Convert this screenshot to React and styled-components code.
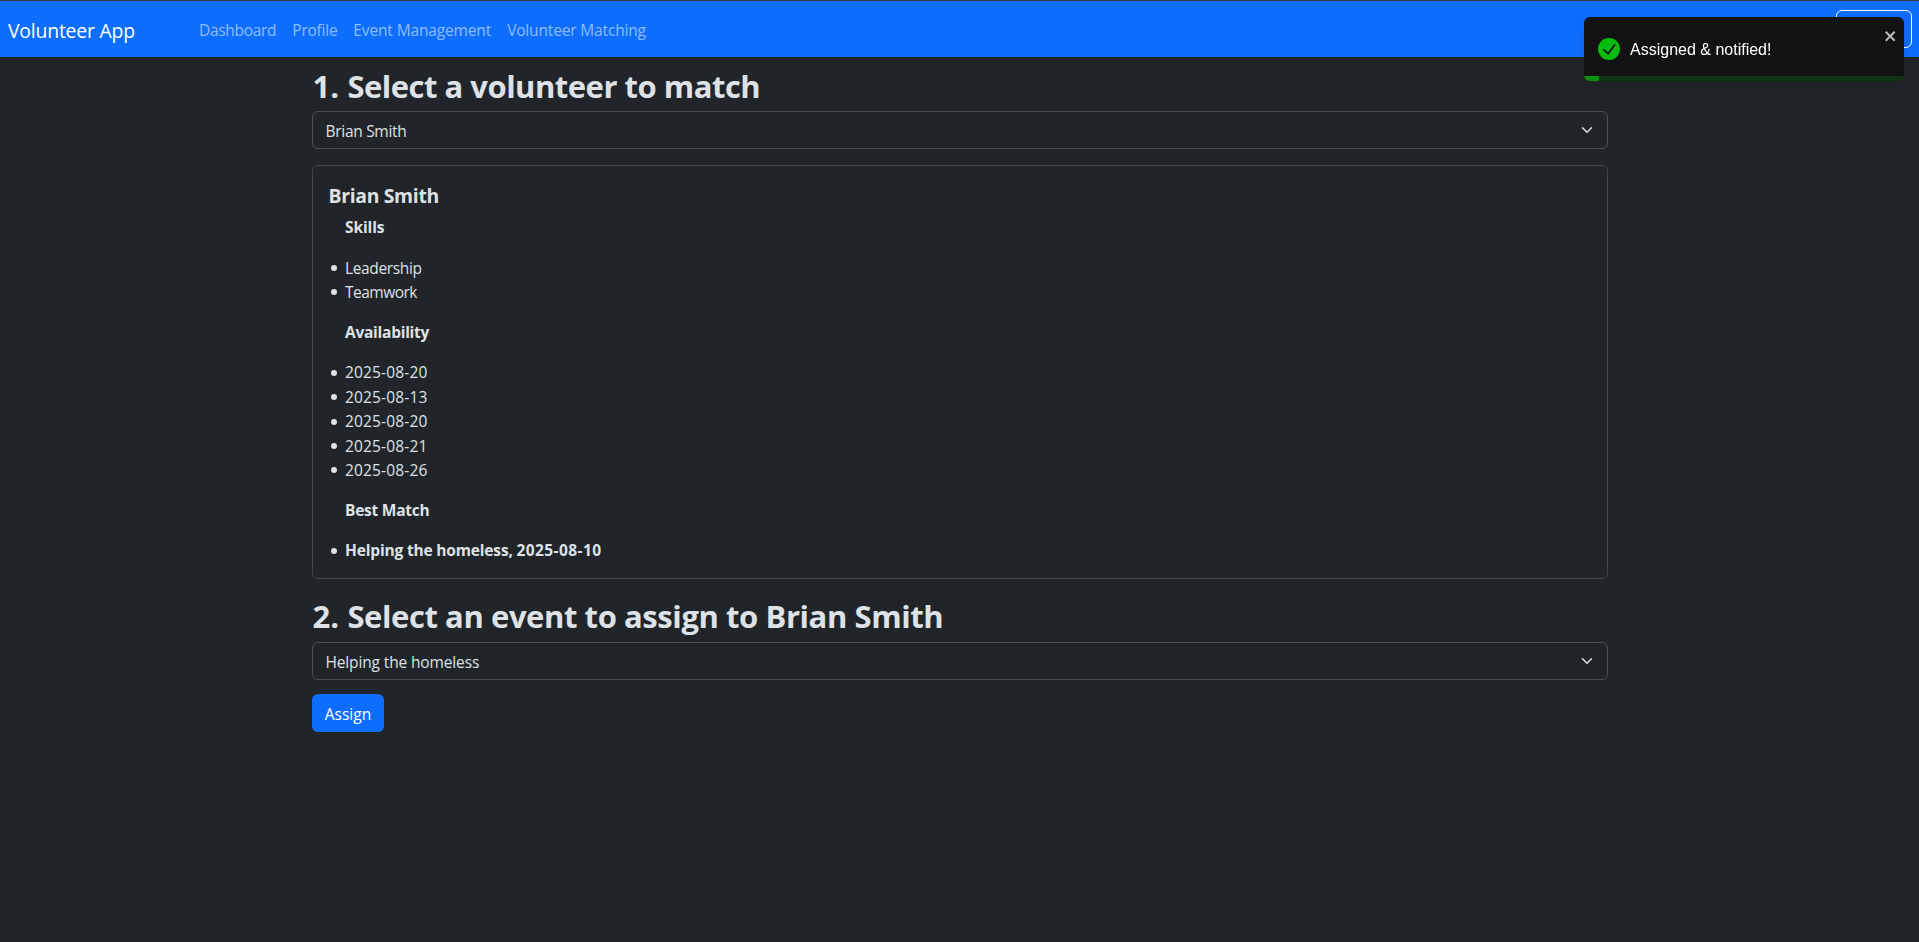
import React from "react";
import styled, { createGlobalStyle } from "styled-components";

const GlobalStyle = createGlobalStyle`
  *, *::before, *::after { box-sizing: border-box; }
  body {
    margin: 0;
    background: #212529;
    color: #dee2e6;
    font-family: "Open Sans", "Noto Sans", sans-serif;
    font-size: 15.5px;
    line-height: 24px;
    overflow: hidden;
  }
`;

const Page = styled.div`
  min-height: 942px;
  border-top: 1px solid #343a46;
`;

const Navbar = styled.nav`
  display: flex;
  align-items: center;
  height: 56px;
  padding: 0 7px 0 8px;
  background: #0d6efd;
`;

const Brand = styled.a`
  width: 183px;
  padding-top: 3px;
  color: #fff;
  font-size: 19.4px;
  line-height: 30px;
  letter-spacing: -0.2px;
  white-space: nowrap;
`;

const NavLinks = styled.div`
  display: flex;
  flex: 1;
  padding-top: 2px;
`;

const NavLink = styled.a`
  padding: 0 8px;
  color: rgba(255, 255, 255, 0.55);
  letter-spacing: ${(p) => p.$track}px;
  white-space: nowrap;
`;

const OutlineButton = styled.button`
  width: 76px;
  height: 38px;
  border: 1px solid #f8f9fa;
  border-radius: 6px;
  background: transparent;
`;

const Container = styled.main`
  width: 1320px;
  margin: 0 auto;
  padding: 8px 12px;
`;

const Heading = styled.h2`
  height: 38.4px;
  margin: 0 0 8px;
  padding-left: 1px;
  font-size: 31px;
  font-weight: 700;
  line-height: 42.4px;
  letter-spacing: ${(p) => p.$track}px;
`;

const Step = styled.span`
  letter-spacing: 0.1px;
`;

const SelectBox = styled.button`
  display: flex;
  align-items: center;
  justify-content: space-between;
  width: 100%;
  height: 38px;
  padding: 0 12px 0 13px;
  border: 1px solid #495057;
  border-radius: 6px;
  background: #212529;
  color: #dee2e6;
  font: inherit;
  letter-spacing: ${(p) => p.$track}px;
`;

const SelectText = styled.span`
  padding-top: 2px;
`;

const Card = styled.section`
  height: 414px;
  margin: 16px 0;
  padding: 16px;
  border: 1px solid #424649;
  border-radius: 6px;
`;

const CardTitle = styled.h5`
  height: 24px;
  margin: 0 0 8px;
  font-size: 19.4px;
  font-weight: 700;
  line-height: 28px;
  letter-spacing: -0.33px;
`;

const Label = styled.p`
  height: 24px;
  margin: 0 0 16px;
  padding-left: 16.5px;
  font-weight: 700;
  line-height: 26px;
  letter-spacing: ${(p) => p.$track}px;
`;

const List = styled.ul`
  margin: 0 0 16px;
  padding: 0;
  list-style: none;
`;

const Item = styled.li`
  display: flex;
  align-items: center;
  height: 24.4px;
  padding-top: 2px;
  font-weight: ${(p) => (p.$bold ? 700 : 400)};
  letter-spacing: ${(p) => p.$track}px;
  white-space: pre;

  &::before {
    content: "";
    width: 6px;
    height: 6px;
    margin: 1px 8px 0 2.5px;
    border-radius: 50%;
    background: #dee2e6;
  }
`;

const Wide = styled.span`
  letter-spacing: 0.4px;
`;

const PrimaryButton = styled.button`
  display: block;
  width: 72px;
  height: 38px;
  margin-top: 14px;
  padding: 2px 0 0 1px;
  border: 0;
  border-radius: 6px;
  background: #0d6efd;
  color: #fff;
  font: inherit;
`;

const Toast = styled.div`
  position: fixed;
  top: 17px;
  right: 15px;
  display: flex;
  align-items: center;
  gap: 10px;
  width: 320px;
  height: 64px;
  padding: 0 14px;
  overflow: hidden;
  border-radius: 6px;
  background: #121212;
  box-shadow: 0 4px 12px rgba(0, 0, 0, 0.1);
  color: #fff;
  font: 16px/20px "Liberation Sans", Arial, sans-serif;
`;

const ToastText = styled.span`
  padding-top: 2px;
`;

const CloseIcon = styled.svg`
  position: absolute;
  top: 11px;
  right: 6px;
  opacity: 0.7;
`;

const ProgressTrack = styled.div`
  position: absolute;
  left: 0;
  bottom: 0;
  width: 100%;
  height: 5px;
  background: rgba(7, 188, 12, 0.2);
`;

const ProgressBar = styled.div`
  width: 15px;
  height: 5px;
  background: rgba(7, 188, 12, 0.7);
`;

const Chevron = () => (
  <svg width="16" height="12" viewBox="0 0 16 16" fill="none">
    <path d="m2 5 6 6 6-6" stroke="#dee2e6" strokeWidth="2" strokeLinecap="round" strokeLinejoin="round" />
  </svg>
);

const links = [
  ["Dashboard", -0.3],
  ["Profile", -0.24],
  ["Event Management", -0.14],
  ["Volunteer Matching", -0.16],
];
const skills = [
  ["Leadership", -0.36],
  ["Teamwork", -0.5],
];
const dates = ["2025-08-20", "2025-08-13", "2025-08-20", "2025-08-21", "2025-08-26"];

export default function App() {
  return (
    <Page>
      <GlobalStyle />
      <Navbar>
        <Brand>Volunteer App</Brand>
        <NavLinks>
          {links.map(([text, track]) => (
            <NavLink key={text} $track={track}>{text}</NavLink>
          ))}
        </NavLinks>
        <OutlineButton />
      </Navbar>

      <Container>
        <Heading $track={-0.5}><Step>1. </Step>Select a volunteer to match</Heading>
        <SelectBox $track={-0.29}>
          <SelectText>Brian Smith</SelectText>
          <Chevron />
        </SelectBox>

        <Card>
          <CardTitle>Brian Smith</CardTitle>
          <Label $track={-0.12}>Skills</Label>
          <List>
            {skills.map(([text, track]) => (
              <Item key={text} $track={track}>{text}</Item>
            ))}
          </List>
          <Label $track={-0.26}>Availability</Label>
          <List>
            {dates.map((date, i) => (
              <Item key={i} $track={0.16}>{date}</Item>
            ))}
          </List>
          <Label $track={-0.24}>Best Match</Label>
          <List>
            <Item $bold $track={-0.17}>
              Helping the homeless, <Wide>2025-08-10</Wide>
            </Item>
          </List>
        </Card>

        <Heading $track={-0.42}><Step>2. </Step>Select an event to assign to Brian Smith</Heading>
        <SelectBox $track={-0.14}>
          <SelectText>Helping the homeless</SelectText>
          <Chevron />
        </SelectBox>
        <PrimaryButton>Assign</PrimaryButton>
      </Container>

      <Toast role="alert">
        <svg width="22" height="22" viewBox="0 0 24 24" fill="#07bc0c">
          <path d="M12 0a12 12 0 1012 12A12.014 12.014 0 0012 0zm6.927 8.2l-6.845 9.289a1.011 1.011 0 01-1.43.188l-4.888-3.908a1 1 0 111.25-1.562l4.076 3.261 6.227-8.451a1 1 0 111.61 1.183z" />
        </svg>
        <ToastText>Assigned &amp; notified!</ToastText>
        <CloseIcon width="14" height="16" viewBox="0 0 14 16" fill="#fff">
          <path fillRule="evenodd" d="M7.71 8.23l3.75 3.75-1.48 1.48-3.75-3.75-3.75 3.75L1 11.98l3.75-3.75L1 4.48 2.48 3l3.75 3.75L9.98 3l1.48 1.48-3.75 3.75z" />
        </CloseIcon>
        <ProgressTrack>
          <ProgressBar />
        </ProgressTrack>
      </Toast>
    </Page>
  );
}
